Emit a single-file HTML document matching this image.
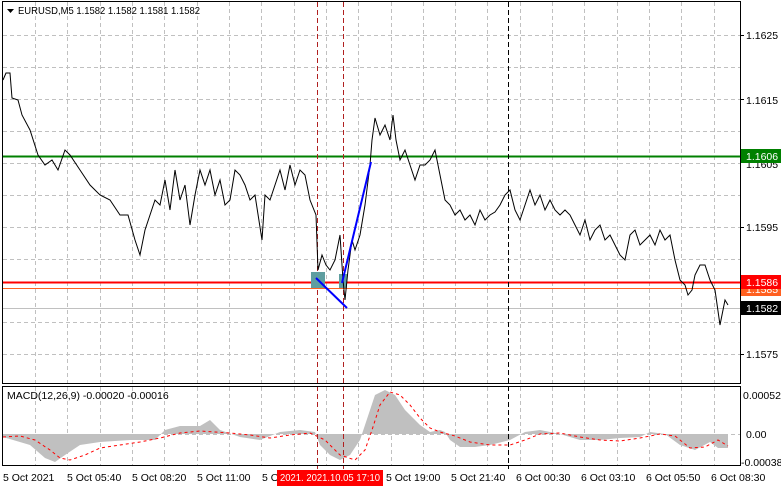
<!DOCTYPE html>
<html><head><meta charset="utf-8"><style>
body{margin:0;background:#fff;width:781px;height:489px;overflow:hidden}
svg text{font-family:"Liberation Sans",sans-serif;font-size:10.5px;fill:#000}
</style></head><body>
<svg width="781" height="489" viewBox="0 0 781 489" xmlns="http://www.w3.org/2000/svg">
<rect width="781" height="489" fill="#fff"/>
<g stroke="#c0c0c0" stroke-dasharray="4,3" stroke-width="1">
<line x1="3" y1="35.5" x2="740" y2="35.5"/><line x1="3" y1="67.5" x2="740" y2="67.5"/><line x1="3" y1="99.5" x2="740" y2="99.5"/><line x1="3" y1="131.5" x2="740" y2="131.5"/><line x1="3" y1="163.5" x2="740" y2="163.5"/><line x1="3" y1="195.5" x2="740" y2="195.5"/><line x1="3" y1="227.5" x2="740" y2="227.5"/><line x1="3" y1="259.5" x2="740" y2="259.5"/><line x1="3" y1="322.5" x2="740" y2="322.5"/><line x1="3" y1="354.5" x2="740" y2="354.5"/>
<line x1="3" y1="434.5" x2="740" y2="434.5"/>
</g>
<g stroke="#c0c0c0" stroke-dasharray="4,3">
<path d="M35.5 2V383M67.5 2V383M100.5 2V383M132.5 2V383M164.5 2V383M197.5 2V383M229.5 2V383M261.5 2V383M294.5 2V383M326.5 2V383M358.5 2V383M391.5 2V383M423.5 2V383M455.5 2V383M487.5 2V383M520.5 2V383M552.5 2V383M584.5 2V383M617.5 2V383M649.5 2V383M681.5 2V383M714.5 2V383"/>
<path d="M35.5 387V466M67.5 387V466M100.5 387V466M132.5 387V466M164.5 387V466M197.5 387V466M229.5 387V466M261.5 387V466M294.5 387V466M326.5 387V466M358.5 387V466M391.5 387V466M423.5 387V466M455.5 387V466M487.5 387V466M520.5 387V466M552.5 387V466M584.5 387V466M617.5 387V466M649.5 387V466M681.5 387V466M714.5 387V466"/>
</g>
<line x1="3" y1="308.5" x2="740" y2="308.5" stroke="#c0c0c0"/>
<polygon fill="#c0c0c0" points="3,434 3,437 30,445 45,458 55,462 65,455 80,445 100,442 130,440 155,440 165,430 180,426 200,426 210,420 220,430 240,437 260,440 280,432 300,430 315,432 320,445 330,455 340,460 350,455 360,440 370,410 375,395 385,390 395,395 405,410 420,425 430,432 440,430 445,432 450,440 460,447 475,447 490,445 510,440 525,432 540,430 560,434 580,440 600,440 620,438 640,437 650,432 665,434 680,445 695,450 710,442 718,448 728,448 728,434"/>
<polyline fill="none" stroke="#f00" stroke-dasharray="3,3" points="3,437 20,436 35,440 50,450 60,458 70,460 85,455 100,448 120,445 140,442 160,438 180,433 200,431 215,432 230,433 250,435 270,438 290,435 310,433 325,440 340,455 355,460 365,450 372,430 380,405 390,392 400,395 410,405 420,418 430,428 440,432 455,436 470,442 490,445 510,445 525,440 540,434 560,433 580,437 600,440 620,441 640,438 660,434 675,436 690,448 705,447 718,440 728,446"/>
<line x1="3" y1="156.5" x2="740" y2="156.5" stroke="#008000" stroke-width="2"/>
<line x1="3" y1="288.5" x2="740" y2="288.5" stroke="#ff6020" stroke-width="1"/>
<line x1="3" y1="282.5" x2="740" y2="282.5" stroke="#ff0000" stroke-width="2"/>
<g stroke="#b02020" stroke-dasharray="5,3">
<line x1="317.5" y1="2" x2="317.5" y2="469"/><line x1="343.5" y1="2" x2="343.5" y2="469"/>
</g>
<line x1="508.5" y1="2" x2="508.5" y2="469" stroke="#000" stroke-dasharray="5,3"/>
<rect x="311" y="272" width="14" height="16" fill="#5f9ea0"/>
<rect x="339" y="274" width="8" height="14" fill="#5f9ea0"/>
<polyline fill="none" stroke="#000" stroke-width="1" points="3,80 6,73 10,73 12,98 18,100 22,115 30,130 38,155 45,165 52,160 58,170 65,150 70,155 80,170 90,185 100,195 110,200 120,215 128,215 135,240 140,255 145,230 155,200 160,205 165,180 170,210 175,170 180,200 185,185 190,225 195,195 200,170 205,185 210,170 215,195 220,180 225,205 230,200 235,170 240,175 245,185 250,200 255,195 262,240 265,195 270,200 275,185 280,170 285,190 290,165 295,185 300,170 305,175 310,200 316,215 318,270 322,255 326,265 330,270 335,260 340,235 343,280 345,300 348,270 352,240 355,250 360,235 365,205 370,165 372,140 375,118 380,135 385,125 390,140 393,115 396,140 400,160 405,150 410,165 415,180 420,165 425,165 430,160 435,150 440,175 445,200 450,205 455,215 460,210 465,220 470,215 475,225 480,210 485,220 490,215 495,212 500,205 505,195 510,190 515,210 520,220 525,205 530,190 535,205 540,195 545,210 550,200 555,210 560,215 565,210 570,215 575,225 580,235 585,220 590,240 595,230 600,225 605,240 610,235 615,245 620,255 625,260 630,235 635,230 640,245 645,240 650,235 655,245 660,230 665,240 670,235 675,260 680,280 685,285 688,295 692,290 695,275 700,265 705,265 710,280 715,290 720,325 725,300 728,305"/>
<g stroke="#0000ff" stroke-width="2">
<line x1="316" y1="278" x2="347" y2="308"/><line x1="342" y1="283" x2="371" y2="162"/>
</g>
<g fill="none" stroke="#000">
<rect x="2.5" y="1.5" width="738" height="382"/>
<line x1="2" y1="386.5" x2="741" y2="386.5"/>
<rect x="2.5" y="386.5" width="738" height="79"/>
</g>
<g>
<line x1="740" y1="35.5" x2="744" y2="35.5" stroke="#000"/><text x="746" y="39">1.1625</text>
<line x1="740" y1="99.5" x2="744" y2="99.5" stroke="#000"/><text x="746" y="104">1.1615</text>
<text x="746" y="168">1.1605</text>
<line x1="740" y1="227.5" x2="744" y2="227.5" stroke="#000"/><text x="746" y="231">1.1595</text>
<rect x="741" y="149" width="40" height="14" fill="#008000"/><text x="746" y="160" style="fill:#fff">1.1606</text>
<rect x="741" y="282" width="40" height="14" fill="#ff6020"/><text x="746" y="293" style="fill:#fff">1.1585</text>
<rect x="741" y="275" width="40" height="14" fill="#ff0000"/><text x="746" y="286" style="fill:#fff">1.1586</text>
<rect x="741" y="301" width="40" height="14" fill="#000"/><text x="746" y="312" style="fill:#fff">1.1582</text>
<line x1="740" y1="354.5" x2="744" y2="354.5" stroke="#000"/><text x="746" y="358">1.1575</text>
<text x="743" y="399">0.00052</text>
<text x="746" y="438">0.00</text>
<text x="741" y="466">-0.00038</text>
</g>
<g>
<text x="3" y="481">5 Oct 2021</text>
<text x="67" y="481">5 Oct 05:40</text>
<text x="132" y="481">5 Oct 08:20</text>
<text x="197" y="481">5 Oct 11:00</text>
<text x="262" y="481">5 Oct 13:40</text>
<text x="386" y="481">5 Oct 19:00</text>
<text x="451" y="481">5 Oct 21:40</text>
<text x="516" y="481">6 Oct 00:30</text>
<text x="581" y="481">6 Oct 03:10</text>
<text x="646" y="481">6 Oct 05:50</text>
<text x="711" y="481">6 Oct 08:30</text>
<rect x="277" y="470" width="106" height="16" fill="#ff0000"/>
<text x="280" y="481" textLength="100" lengthAdjust="spacingAndGlyphs" style="fill:#fff">2021. 2021.10.05 17:10</text>
</g>
<path d="M7 9h7l-3.5 4z" fill="#000"/>
<text x="18" y="14" textLength="182" lengthAdjust="spacingAndGlyphs">EURUSD,M5  1.1582 1.1582 1.1581 1.1582</text>
<text x="7" y="399">MACD(12,26,9) -0.00020 -0.00016</text>
</svg>
</body></html>
